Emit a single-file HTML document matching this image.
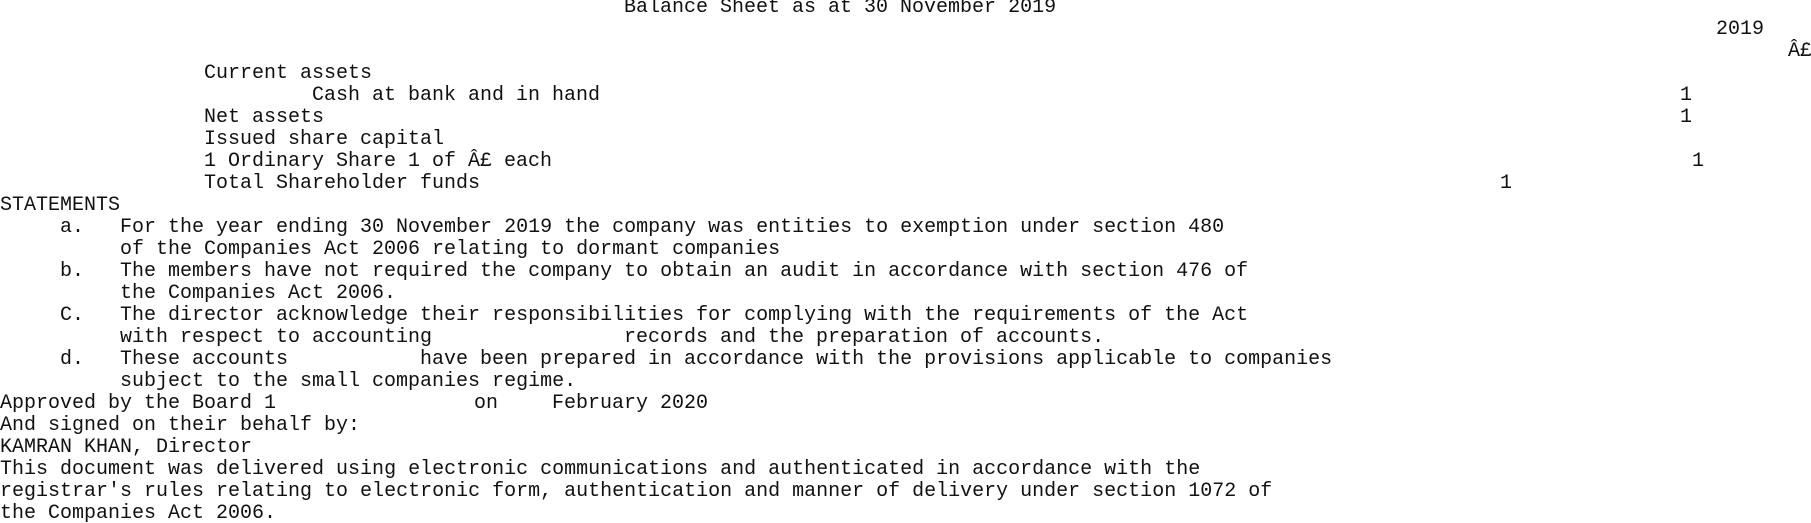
<!DOCTYPE html>
<html><head><meta charset="utf-8"><style>
html,body{margin:0;padding:0;background:#fff;width:1811px;height:523px;overflow:hidden}
body{position:relative;font-family:"Liberation Mono",monospace;font-size:20px;color:#111}
.l{position:absolute;white-space:pre;line-height:22px;height:22px}
</style></head><body>
<div class="l" style="top:-3px;left:624px">Balance Sheet as at 30 November 2019</div>
<div class="l" style="top:19px;left:1716px">2019</div>
<div class="l" style="top:41px;left:1788px">Â£</div>
<div class="l" style="top:63px;left:204px">Current assets</div>
<div class="l" style="top:85px;left:312px">Cash at bank and in hand</div>
<div class="l" style="top:85px;left:1680px">1</div>
<div class="l" style="top:107px;left:204px">Net assets</div>
<div class="l" style="top:107px;left:1680px">1</div>
<div class="l" style="top:129px;left:204px">Issued share capital</div>
<div class="l" style="top:151px;left:204px">1 Ordinary Share 1 of Â£ each</div>
<div class="l" style="top:151px;left:1692px">1</div>
<div class="l" style="top:173px;left:204px">Total Shareholder funds</div>
<div class="l" style="top:173px;left:1500px">1</div>
<div class="l" style="top:195px;left:0px">STATEMENTS</div>
<div class="l" style="top:217px;left:60px">a.</div>
<div class="l" style="top:217px;left:120px">For the year ending 30 November 2019 the company was entities to exemption under section 480</div>
<div class="l" style="top:239px;left:120px">of the Companies Act 2006 relating to dormant companies</div>
<div class="l" style="top:261px;left:60px">b.</div>
<div class="l" style="top:261px;left:120px">The members have not required the company to obtain an audit in accordance with section 476 of</div>
<div class="l" style="top:283px;left:120px">the Companies Act 2006.</div>
<div class="l" style="top:305px;left:60px">C.</div>
<div class="l" style="top:305px;left:120px">The director acknowledge their responsibilities for complying with the requirements of the Act</div>
<div class="l" style="top:327px;left:120px">with respect to accounting</div>
<div class="l" style="top:327px;left:624px">records and the preparation of accounts.</div>
<div class="l" style="top:349px;left:60px">d.</div>
<div class="l" style="top:349px;left:120px">These accounts</div>
<div class="l" style="top:349px;left:420px">have been prepared in accordance with the provisions applicable to companies</div>
<div class="l" style="top:371px;left:120px">subject to the small companies regime.</div>
<div class="l" style="top:393px;left:0px">Approved by the Board 1</div>
<div class="l" style="top:393px;left:474px">on</div>
<div class="l" style="top:393px;left:552px">February 2020</div>
<div class="l" style="top:415px;left:0px">And signed on their behalf by:</div>
<div class="l" style="top:437px;left:0px">KAMRAN KHAN, Director</div>
<div class="l" style="top:459px;left:0px">This document was delivered using electronic communications and authenticated in accordance with the</div>
<div class="l" style="top:481px;left:0px">registrar's rules relating to electronic form, authentication and manner of delivery under section 1072 of</div>
<div class="l" style="top:503px;left:0px">the Companies Act 2006.</div>
</body></html>
